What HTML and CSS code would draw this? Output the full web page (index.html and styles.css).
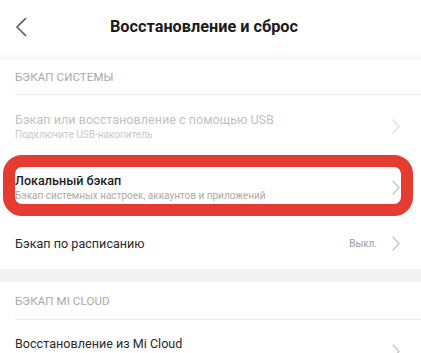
FILE: index.html
```html
<!DOCTYPE html>
<html lang="ru">
<head>
<meta charset="utf-8">
<link rel="stylesheet" href="styles.css">
</head>
<body>
<div class="page">
  <header class="topbar">
    <svg class="back" width="12" height="20" viewBox="0 0 12 20"><path d="M10.5 1.5 L2 10 L10.5 18.5" fill="none" stroke="#555" stroke-width="1.6" stroke-linecap="round" stroke-linejoin="round"/></svg>
    <h1 class="title">Восстановление и сброс</h1>
  </header>
  <div class="band band-top"></div>
  <div class="section-head">БЭКАП СИСТЕМЫ</div>
  <div class="row row-usb disabled">
    <div class="texts">
      <div class="row-title">Бэкап или восстановление с помощью USB</div>
      <div class="row-sub">Подключите USB-накопитель</div>
    </div>
    <svg class="chev" width="8" height="15" viewBox="0 0 8 15"><path d="M1 1 L7 7.5 L1 14" fill="none" stroke="currentColor" stroke-width="1.4" stroke-linecap="round" stroke-linejoin="round"/></svg>
  </div>
  <div class="row row-local">
    <div class="texts">
      <div class="row-title strong">Локальный бэкап</div>
      <div class="row-sub">Бэкап системных настроек, аккаунтов и приложений</div>
    </div>
    <svg class="chev" width="8" height="15" viewBox="0 0 8 15"><path d="M1 1 L7 7.5 L1 14" fill="none" stroke="currentColor" stroke-width="1.4" stroke-linecap="round" stroke-linejoin="round"/></svg>
    <div class="highlight"></div>
  </div>
  <div class="row row-sched">
    <div class="texts">
      <div class="row-title">Бэкап по расписанию</div>
    </div>
    <span class="value">Выкл.</span>
    <svg class="chev" width="8" height="15" viewBox="0 0 8 15"><path d="M1 1 L7 7.5 L1 14" fill="none" stroke="currentColor" stroke-width="1.4" stroke-linecap="round" stroke-linejoin="round"/></svg>
  </div>
  <div class="band band-mid"></div>
  <div class="section-head section-cloud">БЭКАП MI CLOUD</div>
  <div class="row row-cloud">
    <div class="texts texts-top">
      <div class="row-title">Восстановление из Mi Cloud</div>
    </div>
    <svg class="chev" width="8" height="15" viewBox="0 0 8 15"><path d="M1 1 L7 7.5 L1 14" fill="none" stroke="currentColor" stroke-width="1.4" stroke-linecap="round" stroke-linejoin="round"/></svg>
  </div>
</div>
</body>
</html>
```
FILE: styles.css
```css
html, body {
  margin: 0;
  padding: 0;
  background: #fff;
}
body {
  font-family: Roboto, "Noto Sans", sans-serif;
  color: #222;
  overflow: hidden;
}
.page {
  width: 421px;
  height: 353px;
  overflow: hidden;
}
.topbar {
  height: 52px;
  display: flex;
  align-items: center;
  position: relative;
}
.back {
  margin-left: 15px;
  margin-top: 1px;
}
.title {
  margin: 0;
  flex: 1;
  text-align: center;
  padding-right: 40px;
  font-size: 16.3px;
  font-weight: 700;
  color: #1a1a1a;
}
.band-top {
  height: 8px;
  background: linear-gradient(#fcfcfc, #f8f8f8);
}
.band-mid {
  height: 13px;
  background: #f3f3f3;
}
.section-head {
  height: 34px;
  margin-left: 15px;
  border-bottom: 1px solid #ececec;
  display: flex;
  align-items: center;
  font-size: 11.5px;
  color: #a8a8a8;
  letter-spacing: 0.1px;
}
.section-cloud {
  height: 37px;
}
.row {
  display: flex;
  align-items: center;
  padding-left: 15px;
  padding-right: 21px;
  position: relative;
}
.texts {
  flex: 1;
  display: flex;
  flex-direction: column;
  gap: 2px;
}
.texts-top {
  align-self: flex-start;
  padding-top: 16px;
}
.row-title {
  font-size: 12.6px;
  color: #2a2a2a;
}
.row-title.strong {
  font-weight: 500;
  color: #1e1e1e;
}
.row-sub {
  font-size: 10px;
  color: #aaa;
}
.chev {
  color: #c8c8c8;
  flex: none;
}
.row-usb {
  height: 62px;
}
.disabled .row-title {
  color: #c2c2c2;
}
.disabled .row-sub {
  color: #c8c8c8;
}
.disabled .chev {
  color: #e2e2e2;
}
.row-local {
  height: 60px;
}
.row-sched {
  height: 52px;
}
.value {
  font-size: 10px;
  color: #9a9a9a;
  margin-right: 15px;
}
.row-cloud {
  height: 62px;
}
.highlight {
  position: absolute;
  top: -2px;
  left: 3px;
  right: 8px;
  bottom: 1px;
  border: 12px solid #e53b30;
  border-radius: 19px;
  pointer-events: none;
}
```
